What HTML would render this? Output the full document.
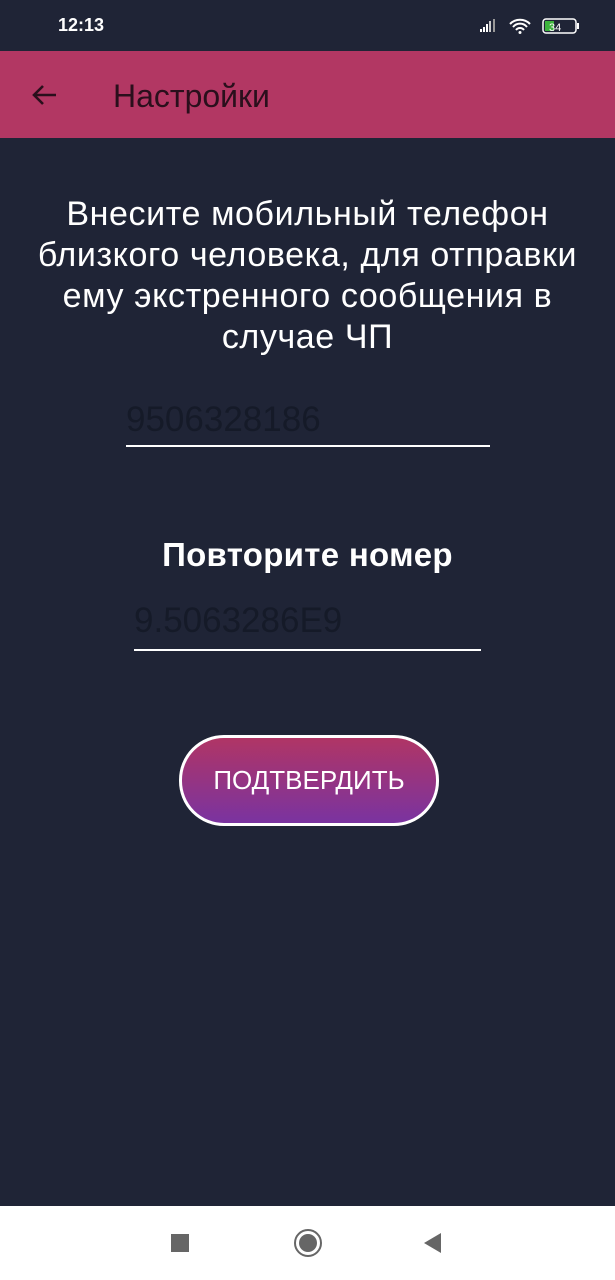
<!DOCTYPE html>
<html><head><meta charset="utf-8"><style>
*{margin:0;padding:0;box-sizing:border-box}
body{width:615px;height:1280px;background:#1f2436;font-family:"Liberation Sans","DejaVu Sans",sans-serif;position:relative;overflow:hidden}
.abs{position:absolute}
</style></head><body>
<div class="abs" style="left:58px;top:15px;color:#fff;font-size:18px;font-weight:bold">12:13</div>
<svg class="abs" style="left:478px;top:17px" width="120" height="20">
<rect x="2" y="12" width="2" height="3" fill="#fff"/><rect x="5" y="10" width="2" height="5" fill="#fff"/><rect x="8" y="7" width="2" height="8" fill="#fff"/><rect x="11" y="4" width="2" height="11" fill="#ccc"/><rect x="15" y="2" width="2" height="13" fill="#999"/>
<path d="M32 7a14 14 0 0 1 20 0M35 10a9 9 0 0 1 14 0M38 13a5 5 0 0 1 8 0" stroke="#fff" stroke-width="2" fill="none"/><circle cx="42" cy="15.5" r="1.5" fill="#fff"/>
<rect x="65" y="2" width="33" height="14" rx="3" stroke="#fff" stroke-width="1.5" fill="none"/><rect x="67" y="4" width="9" height="10" fill="#3db33d"/><rect x="99" y="6" width="2" height="6" fill="#fff"/>
<text x="71" y="14" font-size="11" fill="#fff" font-family="Liberation Sans">34</text>
</svg>
<div class="abs" style="left:0;top:51px;width:615px;height:87px;background:#b23763"></div>
<svg class="abs" style="left:30px;top:83px" width="28" height="24"><path d="M26 12H4M13 3L4 12l9 9" stroke="#2a0f1c" stroke-width="2.6" fill="none"/></svg>
<div class="abs" style="left:113px;top:78px;color:#2a0f1c;font-size:32px">Настройки</div>
<div class="abs" style="left:0;top:194px;width:615px;text-align:center;color:#fff;font-size:34px;letter-spacing:0.6px;line-height:41px;white-space:nowrap">Внесите мобильный телефон<br>близкого человека, для отправки<br>ему экстренного сообщения в<br>случае ЧП</div>
<div class="abs" style="left:126px;top:400px;color:#151a28;font-size:35px">9506328186</div>
<div class="abs" style="left:126px;top:445px;width:364px;height:2px;background:#fff"></div>
<div class="abs" style="left:0;top:536px;width:615px;text-align:center;color:#fff;font-size:33px;font-weight:bold;letter-spacing:0.3px">Повторите номер</div>
<div class="abs" style="left:134px;top:601px;color:#151a28;font-size:35px">9.5063286E9</div>
<div class="abs" style="left:134px;top:649px;width:347px;height:2px;background:#fff"></div>
<div class="abs" style="left:179px;top:735px;width:260px;height:91px;border:3px solid #fff;border-radius:45px;background:linear-gradient(#b03565,#7a33a0);color:#fff;font-size:26px;text-align:center;line-height:85px">ПОДТВЕРДИТЬ</div>
<div class="abs" style="left:0;top:1206px;width:615px;height:74px;background:#fff"></div>
<div class="abs" style="left:171px;top:1234px;width:18px;height:18px;background:#666"></div>
<div class="abs" style="left:294px;top:1229px;width:28px;height:28px;border:2.5px solid #666;border-radius:50%"></div>
<div class="abs" style="left:299px;top:1234px;width:18px;height:18px;background:#666;border-radius:50%"></div>
<svg class="abs" style="left:423px;top:1232px" width="20" height="22"><path d="M18 1v20L1 11z" fill="#666"/></svg>
</body></html>
